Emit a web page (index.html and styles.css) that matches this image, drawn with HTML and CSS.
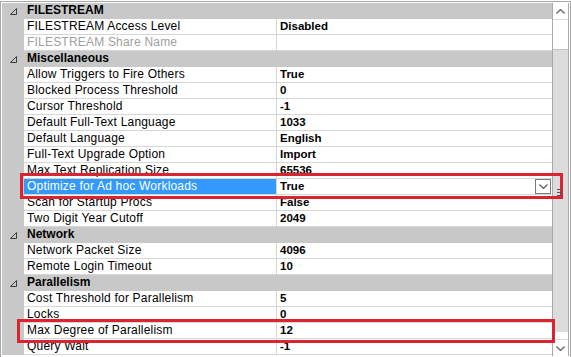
FILE: index.html
```html
<!DOCTYPE html>
<html lang="en">

<head>
    <meta charset="UTF-8">
    <meta name="viewport" content="width=device-width, initial-scale=1.0">
    <title>Server Properties - Advanced</title>
    <link rel="stylesheet" href="styles.css">
</head>

<body>
    <div class="grid">
        <div class="list">
            <div class="cat">
                <span class="toggle"><svg width="7" height="7" viewBox="0 0 7 7"><polygon points="6.5,0.5 6.5,6.5 0.5,6.5" /></svg></span>
                <span class="cat-name">FILESTREAM</span>
            </div>
            <div class="row"><span class="gutter"></span><span class="name">FILESTREAM Access Level</span><span class="value">Disabled</span></div>
            <div class="row"><span class="gutter"></span><span class="name disabled">FILESTREAM Share Name</span><span class="value"></span></div>

            <div class="cat">
                <span class="toggle"><svg width="7" height="7" viewBox="0 0 7 7"><polygon points="6.5,0.5 6.5,6.5 0.5,6.5" /></svg></span>
                <span class="cat-name">Miscellaneous</span>
            </div>
            <div class="row"><span class="gutter"></span><span class="name">Allow Triggers to Fire Others</span><span class="value">True</span></div>
            <div class="row"><span class="gutter"></span><span class="name">Blocked Process Threshold</span><span class="value">0</span></div>
            <div class="row"><span class="gutter"></span><span class="name">Cursor Threshold</span><span class="value">-1</span></div>
            <div class="row"><span class="gutter"></span><span class="name">Default Full-Text Language</span><span class="value">1033</span></div>
            <div class="row"><span class="gutter"></span><span class="name">Default Language</span><span class="value">English</span></div>
            <div class="row"><span class="gutter"></span><span class="name">Full-Text Upgrade Option</span><span class="value">Import</span></div>
            <div class="row"><span class="gutter"></span><span class="name">Max Text Replication Size</span><span class="value">65536</span></div>
            <div class="row selected">
                <span class="gutter"></span>
                <span class="name">Optimize for Ad hoc Workloads</span>
                <span class="value">True
                    <span class="dropdown"><svg width="9" height="5" viewBox="0 0 9 5"><polyline points="0.5,0.5 4.5,4.5 8.5,0.5" /></svg></span>
                </span>
            </div>
            <div class="row"><span class="gutter"></span><span class="name">Scan for Startup Procs</span><span class="value">False</span></div>
            <div class="row"><span class="gutter"></span><span class="name">Two Digit Year Cutoff</span><span class="value">2049</span></div>

            <div class="cat">
                <span class="toggle"><svg width="7" height="7" viewBox="0 0 7 7"><polygon points="6.5,0.5 6.5,6.5 0.5,6.5" /></svg></span>
                <span class="cat-name">Network</span>
            </div>
            <div class="row"><span class="gutter"></span><span class="name">Network Packet Size</span><span class="value">4096</span></div>
            <div class="row"><span class="gutter"></span><span class="name">Remote Login Timeout</span><span class="value">10</span></div>

            <div class="cat">
                <span class="toggle"><svg width="7" height="7" viewBox="0 0 7 7"><polygon points="6.5,0.5 6.5,6.5 0.5,6.5" /></svg></span>
                <span class="cat-name">Parallelism</span>
            </div>
            <div class="row"><span class="gutter"></span><span class="name">Cost Threshold for Parallelism</span><span class="value">5</span></div>
            <div class="row"><span class="gutter"></span><span class="name">Locks</span><span class="value">0</span></div>
            <div class="row"><span class="gutter"></span><span class="name">Max Degree of Parallelism</span><span class="value">12</span></div>
            <div class="row"><span class="gutter"></span><span class="name">Query Wait</span><span class="value">-1</span></div>
        </div>

        <div class="scrollbar">
            <div class="sb-btn"><svg width="9" height="5" viewBox="0 0 9 5"><polyline points="0.5,4.5 4.5,0.5 8.5,4.5" /></svg></div>
            <div class="sb-track"><div class="sb-thumb"></div></div>
            <div class="sb-btn"><svg width="9" height="5" viewBox="0 0 9 5"><polyline points="0.5,0.5 4.5,4.5 8.5,0.5" /></svg></div>
        </div>

        <div class="mark mark-optimize"></div>
        <div class="mark mark-degree"></div>
        <div class="grip"><i></i><i></i><i></i></div>
    </div>
</body>

</html>
```

FILE: styles.css
```css
body {
    margin: 0;
    padding: 0;
    background: white;
    font-family: 'Liberation Sans', Arial, sans-serif;
    font-size: 12px;
    color: black;
}

.grid {
    position: relative;
    display: flex;
    width: 571px;
    height: 356px;
    margin-top: 1px;
    padding: 1px;
    box-sizing: border-box;
    border: 1px solid #a9a9a9;
    border-bottom: none;
    background: white;
}

.list {
    flex: 1;
    display: flex;
    flex-direction: column;
}

.cat,
.row {
    display: flex;
    height: 16px;
    line-height: 15px;
    flex-shrink: 0;
}

.cat {
    background: #c8c8c8;
}

.toggle {
    width: 22px;
    display: flex;
    justify-content: center;
    align-items: center;
}

.toggle svg polygon {
    fill: none;
    stroke: #3c3c3c;
    stroke-width: 1;
}

.cat-name {
    padding-left: 3px;
    font-weight: bold;
}

.gutter {
    width: 22px;
    background: #c8c8c8;
}

.name {
    width: 253px;
    padding-left: 3px;
    box-sizing: border-box;
    border-right: 1px solid #d6d6d6;
    border-bottom: 1px solid #d6d6d6;
    white-space: nowrap;
    overflow: hidden;
    letter-spacing: 0.2px;
}

.name.disabled {
    color: #a0a0a0;
}

.value {
    flex: 1;
    position: relative;
    padding-left: 3px;
    font-weight: bold;
    font-size: 11.5px;
    border-bottom: 1px solid #d6d6d6;
}

.selected .name {
    background: #3399ff;
    color: white;
}

.dropdown {
    position: absolute;
    right: 1px;
    top: 0;
    width: 16px;
    height: 15px;
    box-sizing: border-box;
    border: 1px solid #7a7a7a;
    background: white;
    display: flex;
    justify-content: center;
    align-items: center;
}

.dropdown svg polyline,
.sb-btn svg polyline {
    fill: none;
    stroke: #606060;
    stroke-width: 1.3;
}

.scrollbar {
    width: 17px;
    display: flex;
    flex-direction: column;
    border-left: 1px solid #a9a9a9;
    border-right: 1px solid #a9a9a9;
    box-sizing: border-box;
}

.sb-btn {
    height: 16px;
    display: flex;
    justify-content: center;
    align-items: center;
    background: white;
    flex-shrink: 0;
}

.sb-track {
    flex: 1;
    padding: 29px 0 7px;
    background: white;
    display: flex;
    border-top: 1px solid #dadada;
    border-bottom: 1px solid #dadada;
}

.sb-thumb {
    flex: 1;
    background: #dcdcdc;
    border-top: 1px solid #c4c4c4;
}

/* annotation boxes drawn over the grid */
.mark {
    position: absolute;
    border: 3px solid #dc2430;
    box-sizing: border-box;
}

.mark-optimize {
    left: 19px;
    top: 171px;
    width: 543px;
    height: 26px;
}

.mark-degree {
    left: 16px;
    top: 317px;
    width: 538px;
    height: 24px;
}

.grip {
    position: absolute;
    left: 556px;
    top: 187px;
    display: flex;
    flex-direction: column;
    gap: 2px;
}

.grip i {
    display: block;
    width: 5px;
    height: 1px;
    background: #555;
}
```
